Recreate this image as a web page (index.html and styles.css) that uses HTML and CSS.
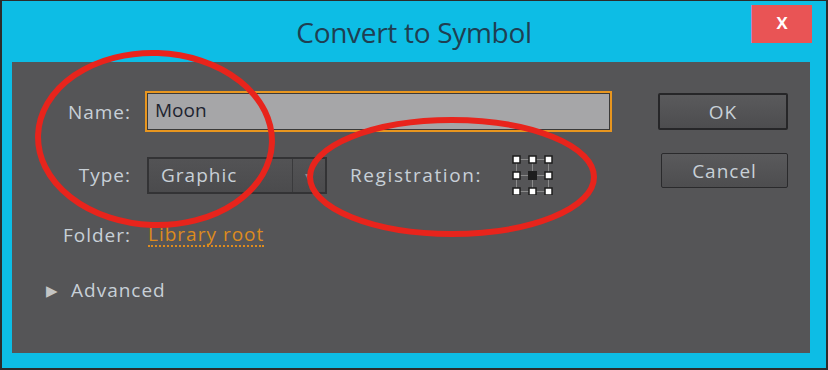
FILE: index.html
```html
<!DOCTYPE html>
<html lang="en">
<head>
  <meta charset="UTF-8">
  <title>Convert to Symbol</title>
  <link rel="stylesheet" href="styles.css">
</head>
<body>

  <div class="window">
    <div class="titlebar">
      <span></span>
      <h1 class="title">Convert to Symbol</h1>
      <button class="close-btn">x</button>
    </div>

    <div class="panel">
      <div class="form">
        <div class="row row-name">
          <label class="label" for="name">Name:</label>
          <div class="name-input">Moon</div>
        </div>

        <div class="row row-type">
          <span class="label">Type:</span>
          <div class="select">
            <span class="select-value">Graphic</span>
            <span class="select-arrow">&#9662;</span>
          </div>
          <span class="reg-label">Registration:</span>
          <svg class="reg-grid" width="42" height="40" viewBox="0 0 42 40">
            <path d="M5 4.5H37M5 20.5H37M5 36.5H37M4.5 4V37M20.5 4V37M36.5 4V37" stroke="#8a8a8a" stroke-width="1" fill="none"/>
            <g fill="#fff" stroke="#1c1c1c" stroke-width="1.5">
              <rect x="1" y="1" width="7" height="7"/>
              <rect x="17" y="1" width="7" height="7"/>
              <rect x="33" y="1" width="7" height="7"/>
              <rect x="1" y="17" width="7" height="7"/>
              <rect x="33" y="17" width="7" height="7"/>
              <rect x="1" y="33" width="7" height="7"/>
              <rect x="17" y="33" width="7" height="7"/>
              <rect x="33" y="33" width="7" height="7"/>
            </g>
            <rect x="16" y="16" width="9" height="9" fill="#1e1e1e"/>
          </svg>
        </div>

        <div class="row row-folder">
          <span class="label">Folder:</span>
          <a class="folder-link">Library root</a>
        </div>

        <div class="row row-advanced">
          <span class="triangle">&#9654;</span>
          <span class="advanced">Advanced</span>
        </div>
      </div>

      <div class="buttons">
        <button class="btn btn-ok">OK</button>
        <button class="btn btn-cancel">Cancel</button>
      </div>
    </div>

    <!-- hand drawn marks over the dialog -->
    <svg class="marks" width="828" height="370" viewBox="0 0 828 370">
      <ellipse cx="155" cy="139" rx="117" ry="86" transform="rotate(2 155 139)" fill="none" stroke="#e8241c" stroke-width="6"/>
      <ellipse cx="452" cy="177" rx="142" ry="57" fill="none" stroke="#e8241c" stroke-width="6"/>
    </svg>
  </div>

</body>
</html>
```

FILE: styles.css
```css
* {
  box-sizing: border-box;
}

body {
  margin: 0;
  font-family: "Open Sans", "Liberation Sans", sans-serif;
  background: #fff;
}

.window {
  position: relative;
  width: 828px;
  height: 370px;
  background-color: #0dbde5;
  border: 2px solid #2c2c2c;
  border-top-width: 1px;
  display: flex;
  flex-direction: column;
}

.titlebar {
  height: 61px;
  display: grid;
  grid-template-columns: 1fr auto 1fr;
  align-items: start;
}

.title {
  margin: 12px 0 0;
  font-size: 28px;
  font-weight: normal;
  color: #1f3f52;
  letter-spacing: -0.3px;
}

.close-btn {
  justify-self: end;
  margin: 4px 14px 0 0;
  width: 61px;
  height: 38px;
  border: none;
  border-left: 1px solid #b58ac8;
  background-color: #e95455;
  color: #fff;
  font-family: "Open Sans", sans-serif;
  font-size: 21px;
  font-weight: 600;
  line-height: 1;
  padding: 0 0 6px;
}

.panel {
  margin: 0 16px 15px 10px;
  flex: 1;
  background-color: #555557;
  display: flex;
}

.form {
  flex: 1;
  padding-top: 29px;
}

.row {
  display: flex;
  align-items: center;
  color: #c8d0d7;
  font-size: 19px;
  letter-spacing: 1px;
}

.label {
  width: 119px;
  text-align: right;
  margin-right: 14px;
}

.name-input {
  width: 467px;
  height: 41px;
  border: 2px solid #e8961f;
  box-shadow: inset 0 0 0 1px #3a3a3a;
  background-color: #a6a6a8;
  color: #1e2430;
  padding: 4px 8px;
  letter-spacing: 0;
}

.row-type {
  margin-top: 23px;
}

.select {
  width: 180px;
  height: 37px;
  margin-left: 2px;
  border: 2px solid #333335;
  background: linear-gradient(#535355, #4b4b4d);
  display: flex;
  align-items: center;
}

.select-value {
  flex: 1;
  padding-left: 12px;
}

.select-arrow {
  width: 33px;
  height: 100%;
  border-left: 1px solid #3a3a3c;
  color: #8e8e90;
  font-size: 14px;
  display: flex;
  align-items: center;
  justify-content: center;
}

.reg-label {
  margin-left: 23px;
  letter-spacing: 1.6px;
}

.reg-grid {
  flex-shrink: 0;
  margin-left: 30px;
}

.row-folder {
  margin-top: 27px;
}

.folder-link {
  margin-left: 3px;
  color: #dd8b1e;
  border-bottom: 2px dotted #dd8b1e;
  line-height: 22px;
}

.row-advanced {
  margin-top: 29px;
  padding-left: 34px;
}

.triangle {
  color: #c4c4c4;
  font-size: 15px;
  margin-right: 12px;
}

.buttons {
  width: 130px;
  margin-right: 22px;
  padding-top: 31px;
  display: flex;
  flex-direction: column;
  align-items: flex-end;
}

.btn {
  font-family: "Open Sans", sans-serif;
  font-size: 19px;
  letter-spacing: 1px;
  color: #c8d0d7;
  background: linear-gradient(#5a5a5c, #4d4d4f);
  border-radius: 2px;
  padding: 0;
}

.btn-ok {
  width: 130px;
  height: 37px;
  border: 2px solid #262628;
}

.btn-cancel {
  width: 127px;
  height: 35px;
  margin-top: 23px;
  border: 1px solid #2a2a2c;
}

.marks {
  position: absolute;
  top: -1px;
  left: -2px;
  pointer-events: none;
}
```
